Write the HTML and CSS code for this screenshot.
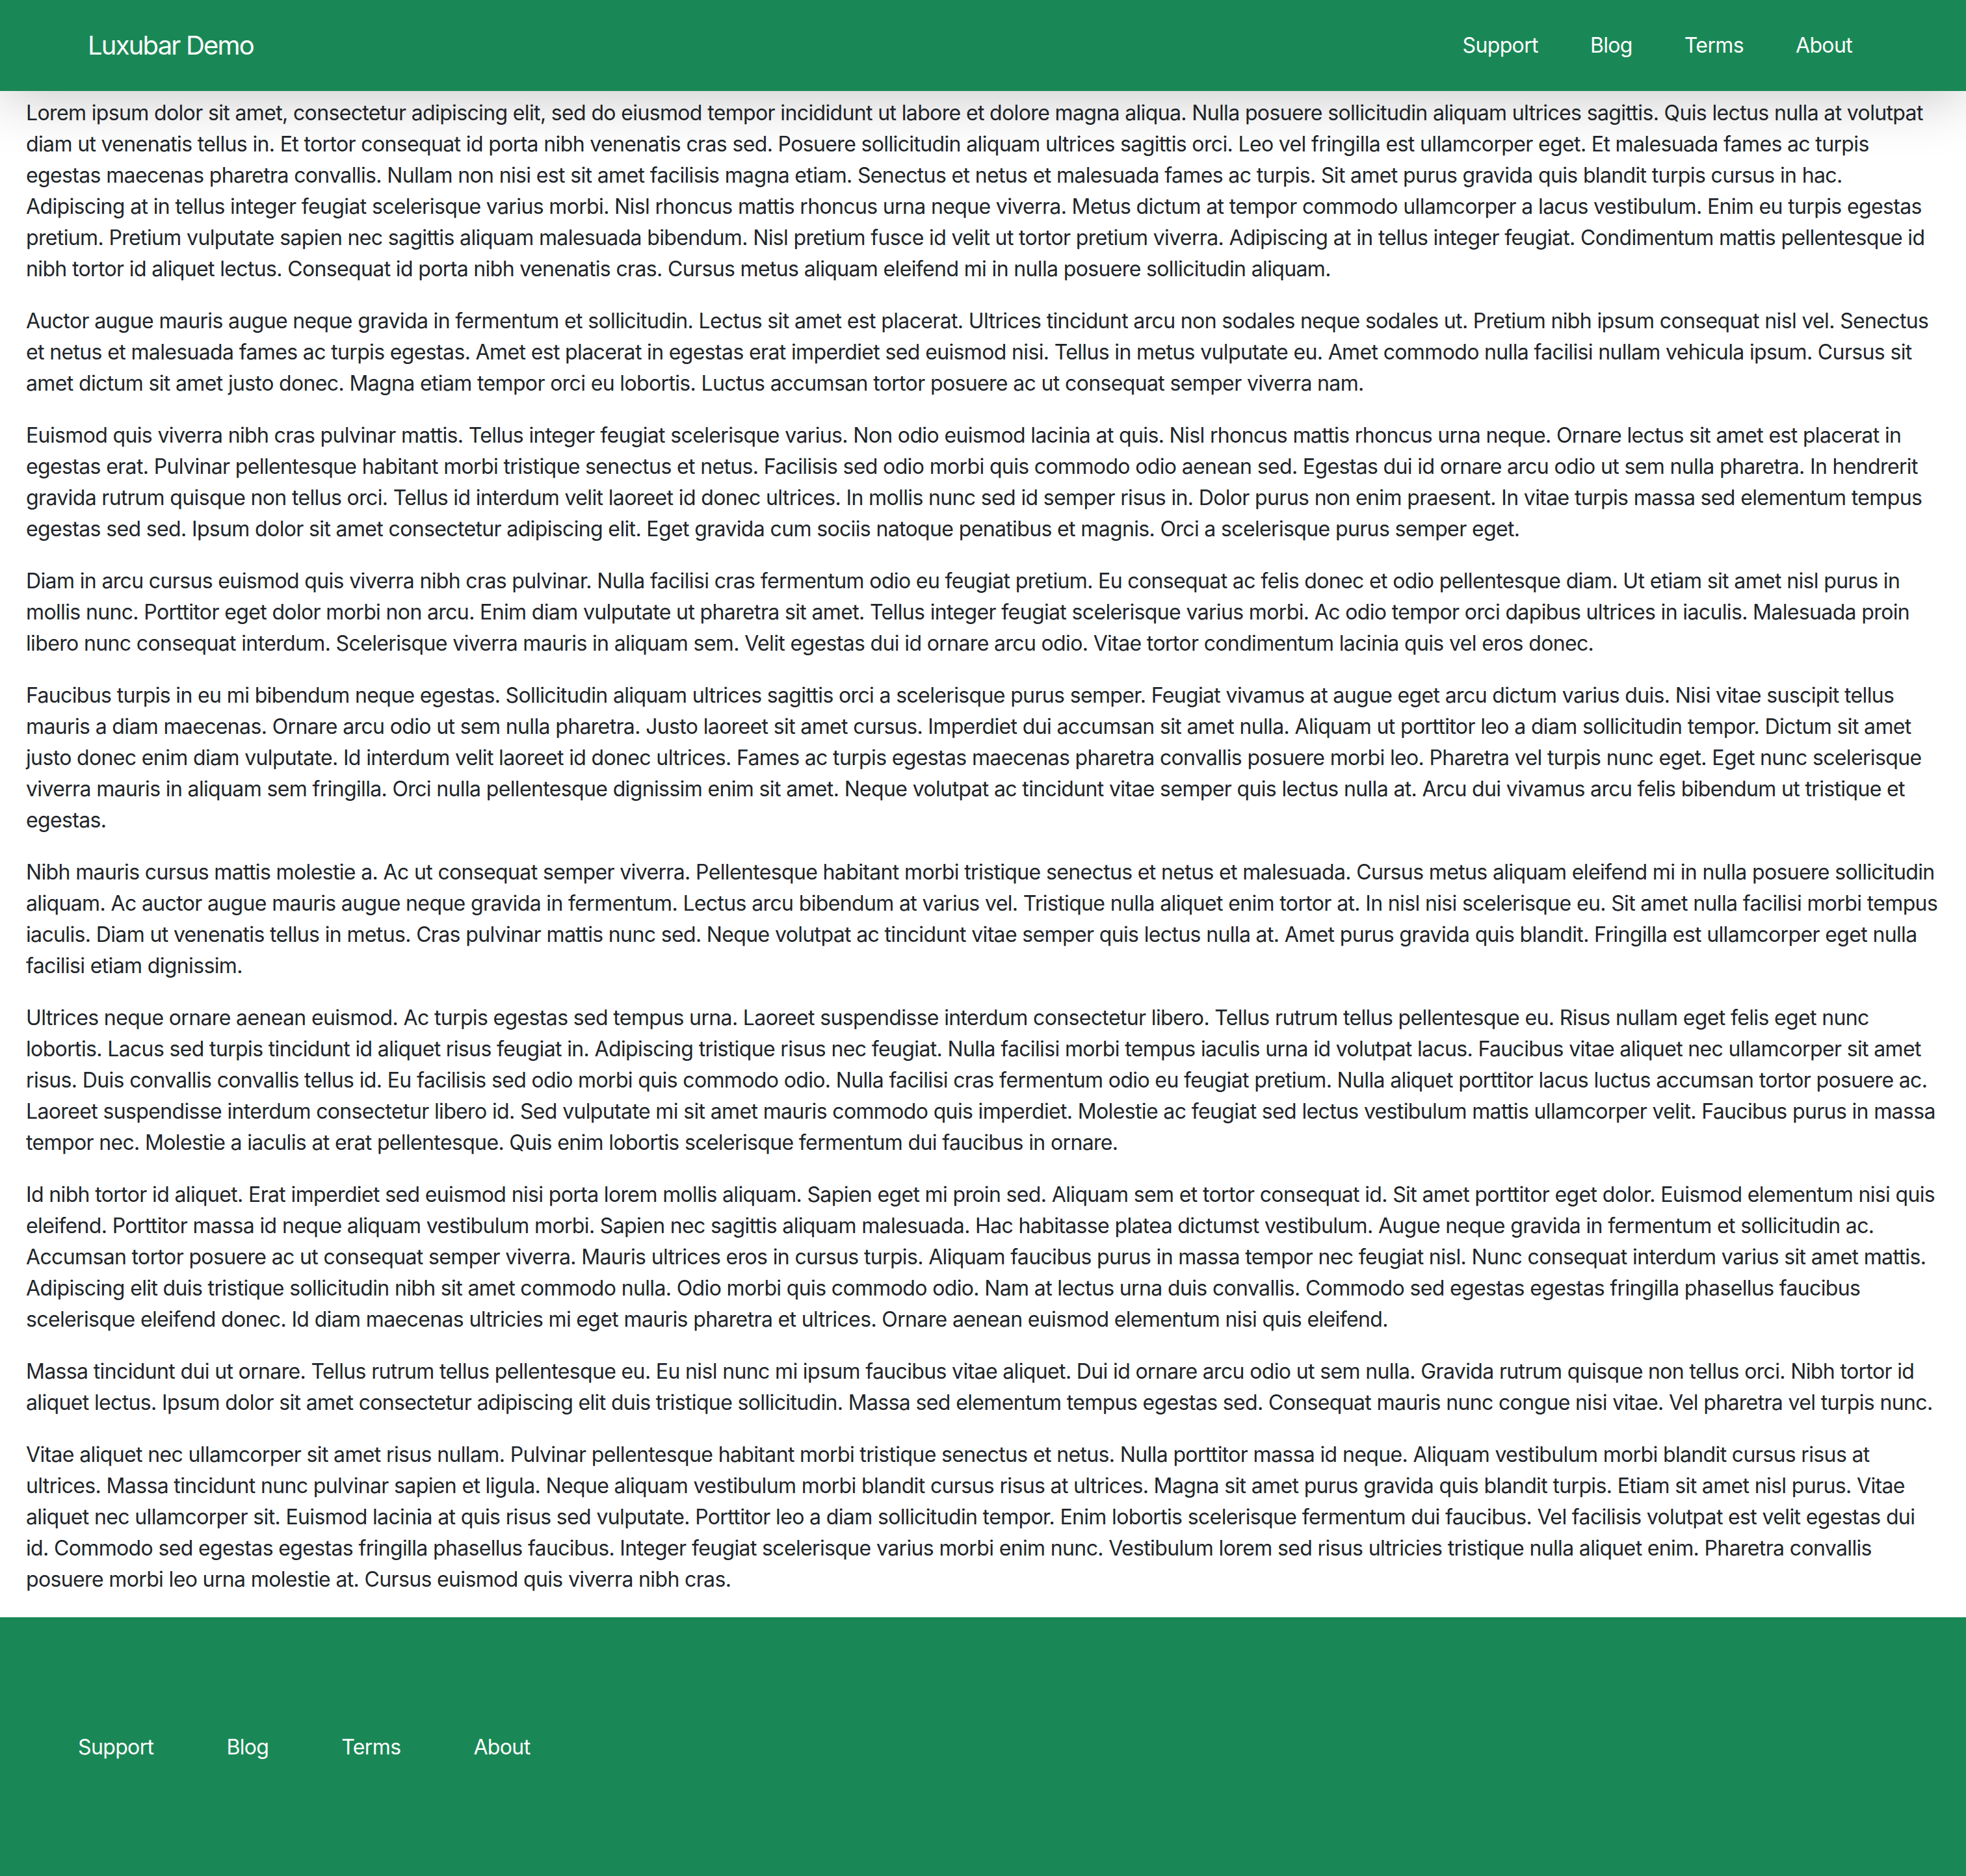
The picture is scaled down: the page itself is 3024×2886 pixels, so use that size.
FILE: index.html
```html
<!DOCTYPE html>
<html lang="en">
<head>
<meta charset="utf-8">
<title>Luxubar Demo</title>
<link rel="stylesheet" href="styles.css">
</head>
<body>
<header class="topbar">
  <a class="brand" href="#">Luxubar Demo</a>
  <nav class="topnav">
    <a class="navlink" href="#">Support</a>
    <a class="navlink" href="#">Blog</a>
    <a class="navlink" href="#">Terms</a>
    <a class="navlink" href="#">About</a>
  </nav>
</header>
<main class="content">
<p>Lorem ipsum dolor sit amet, consectetur adipiscing elit, sed do eiusmod tempor incididunt ut labore et dolore magna aliqua. Nulla posuere sollicitudin aliquam ultrices sagittis. Quis lectus nulla at volutpat diam ut venenatis tellus in. Et tortor consequat id porta nibh venenatis cras sed. Posuere sollicitudin aliquam ultrices sagittis orci. Leo vel fringilla est ullamcorper eget. Et malesuada fames ac turpis egestas maecenas pharetra convallis. Nullam non nisi est sit amet facilisis magna etiam. Senectus et netus et malesuada fames ac turpis. Sit amet purus gravida quis blandit turpis cursus in hac. Adipiscing at in tellus integer feugiat scelerisque varius morbi. Nisl rhoncus mattis rhoncus urna neque viverra. Metus dictum at tempor commodo ullamcorper a lacus vestibulum. Enim eu turpis egestas pretium. Pretium vulputate sapien nec sagittis aliquam malesuada bibendum. Nisl pretium fusce id velit ut tortor pretium viverra. Adipiscing at in tellus integer feugiat. Condimentum mattis pellentesque id nibh tortor id aliquet lectus. Consequat id porta nibh venenatis cras. Cursus metus aliquam eleifend mi in nulla posuere sollicitudin aliquam.</p>
<p>Auctor augue mauris augue neque gravida in fermentum et sollicitudin. Lectus sit amet est placerat. Ultrices tincidunt arcu non sodales neque sodales ut. Pretium nibh ipsum consequat nisl vel. Senectus et netus et malesuada fames ac turpis egestas. Amet est placerat in egestas erat imperdiet sed euismod nisi. Tellus in metus vulputate eu. Amet commodo nulla facilisi nullam vehicula ipsum. Cursus sit amet dictum sit amet justo donec. Magna etiam tempor orci eu lobortis. Luctus accumsan tortor posuere ac ut consequat semper viverra nam.</p>
<p>Euismod quis viverra nibh cras pulvinar mattis. Tellus integer feugiat scelerisque varius. Non odio euismod lacinia at quis. Nisl rhoncus mattis rhoncus urna neque. Ornare lectus sit amet est placerat in egestas erat. Pulvinar pellentesque habitant morbi tristique senectus et netus. Facilisis sed odio morbi quis commodo odio aenean sed. Egestas dui id ornare arcu odio ut sem nulla pharetra. In hendrerit gravida rutrum quisque non tellus orci. Tellus id interdum velit laoreet id donec ultrices. In mollis nunc sed id semper risus in. Dolor purus non enim praesent. In vitae turpis massa sed elementum tempus egestas sed sed. Ipsum dolor sit amet consectetur adipiscing elit. Eget gravida cum sociis natoque penatibus et magnis. Orci a scelerisque purus semper eget.</p>
<p>Diam in arcu cursus euismod quis viverra nibh cras pulvinar. Nulla facilisi cras fermentum odio eu feugiat pretium. Eu consequat ac felis donec et odio pellentesque diam. Ut etiam sit amet nisl purus in mollis nunc. Porttitor eget dolor morbi non arcu. Enim diam vulputate ut pharetra sit amet. Tellus integer feugiat scelerisque varius morbi. Ac odio tempor orci dapibus ultrices in iaculis. Malesuada proin libero nunc consequat interdum. Scelerisque viverra mauris in aliquam sem. Velit egestas dui id ornare arcu odio. Vitae tortor condimentum lacinia quis vel eros donec.</p>
<p>Faucibus turpis in eu mi bibendum neque egestas. Sollicitudin aliquam ultrices sagittis orci a scelerisque purus semper. Feugiat vivamus at augue eget arcu dictum varius duis. Nisi vitae suscipit tellus mauris a diam maecenas. Ornare arcu odio ut sem nulla pharetra. Justo laoreet sit amet cursus. Imperdiet dui accumsan sit amet nulla. Aliquam ut porttitor leo a diam sollicitudin tempor. Dictum sit amet justo donec enim diam vulputate. Id interdum velit laoreet id donec ultrices. Fames ac turpis egestas maecenas pharetra convallis posuere morbi leo. Pharetra vel turpis nunc eget. Eget nunc scelerisque viverra mauris in aliquam sem fringilla. Orci nulla pellentesque dignissim enim sit amet. Neque volutpat ac tincidunt vitae semper quis lectus nulla at. Arcu dui vivamus arcu felis bibendum ut tristique et egestas.</p>
<p>Nibh mauris cursus mattis molestie a. Ac ut consequat semper viverra. Pellentesque habitant morbi tristique senectus et netus et malesuada. Cursus metus aliquam eleifend mi in nulla posuere sollicitudin aliquam. Ac auctor augue mauris augue neque gravida in fermentum. Lectus arcu bibendum at varius vel. Tristique nulla aliquet enim tortor at. In nisl nisi scelerisque eu. Sit amet nulla facilisi morbi tempus iaculis. Diam ut venenatis tellus in metus. Cras pulvinar mattis nunc sed. Neque volutpat ac tincidunt vitae semper quis lectus nulla at. Amet purus gravida quis blandit. Fringilla est ullamcorper eget nulla facilisi etiam dignissim.</p>
<p>Ultrices neque ornare aenean euismod. Ac turpis egestas sed tempus urna. Laoreet suspendisse interdum consectetur libero. Tellus rutrum tellus pellentesque eu. Risus nullam eget felis eget nunc lobortis. Lacus sed turpis tincidunt id aliquet risus feugiat in. Adipiscing tristique risus nec feugiat. Nulla facilisi morbi tempus iaculis urna id volutpat lacus. Faucibus vitae aliquet nec ullamcorper sit amet risus. Duis convallis convallis tellus id. Eu facilisis sed odio morbi quis commodo odio. Nulla facilisi cras fermentum odio eu feugiat pretium. Nulla aliquet porttitor lacus luctus accumsan tortor posuere ac. Laoreet suspendisse interdum consectetur libero id. Sed vulputate mi sit amet mauris commodo quis imperdiet. Molestie ac feugiat sed lectus vestibulum mattis ullamcorper velit. Faucibus purus in massa tempor nec. Molestie a iaculis at erat pellentesque. Quis enim lobortis scelerisque fermentum dui faucibus in ornare.</p>
<p>Id nibh tortor id aliquet. Erat imperdiet sed euismod nisi porta lorem mollis aliquam. Sapien eget mi proin sed. Aliquam sem et tortor consequat id. Sit amet porttitor eget dolor. Euismod elementum nisi quis eleifend. Porttitor massa id neque aliquam vestibulum morbi. Sapien nec sagittis aliquam malesuada. Hac habitasse platea dictumst vestibulum. Augue neque gravida in fermentum et sollicitudin ac. Accumsan tortor posuere ac ut consequat semper viverra. Mauris ultrices eros in cursus turpis. Aliquam faucibus purus in massa tempor nec feugiat nisl. Nunc consequat interdum varius sit amet mattis. Adipiscing elit duis tristique sollicitudin nibh sit amet commodo nulla. Odio morbi quis commodo odio. Nam at lectus urna duis convallis. Commodo sed egestas egestas fringilla phasellus faucibus scelerisque eleifend donec. Id diam maecenas ultricies mi eget mauris pharetra et ultrices. Ornare aenean euismod elementum nisi quis eleifend.</p>
<p>Massa tincidunt dui ut ornare. Tellus rutrum tellus pellentesque eu. Eu nisl nunc mi ipsum faucibus vitae aliquet. Dui id ornare arcu odio ut sem nulla. Gravida rutrum quisque non tellus orci. Nibh tortor id aliquet lectus. Ipsum dolor sit amet consectetur adipiscing elit duis tristique sollicitudin. Massa sed elementum tempus egestas sed. Consequat mauris nunc congue nisi vitae. Vel pharetra vel turpis nunc.</p>
<p>Vitae aliquet nec ullamcorper sit amet risus nullam. Pulvinar pellentesque habitant morbi tristique senectus et netus. Nulla porttitor massa id neque. Aliquam vestibulum morbi blandit cursus risus at ultrices. Massa tincidunt nunc pulvinar sapien et ligula. Neque aliquam vestibulum morbi blandit cursus risus at ultrices. Magna sit amet purus gravida quis blandit turpis. Etiam sit amet nisl purus. Vitae aliquet nec ullamcorper sit. Euismod lacinia at quis risus sed vulputate. Porttitor leo a diam sollicitudin tempor. Enim lobortis scelerisque fermentum dui faucibus. Vel facilisis volutpat est velit egestas dui id. Commodo sed egestas egestas fringilla phasellus faucibus. Integer feugiat scelerisque varius morbi enim nunc. Vestibulum lorem sed risus ultricies tristique nulla aliquet enim. Pharetra convallis posuere morbi leo urna molestie at. Cursus euismod quis viverra nibh cras.</p>
</main>
<footer class="footer">
  <nav class="footnav">
    <a class="footlink" href="#">Support</a>
    <a class="footlink" href="#">Blog</a>
    <a class="footlink" href="#">Terms</a>
    <a class="footlink" href="#">About</a>
  </nav>
</footer>
</body>
</html>
```
FILE: styles.css
```css
* { box-sizing: border-box; }
html, body { margin: 0; padding: 0; background: #fff; }
body {
  font-family: Inter, "Noto Sans", "Liberation Sans", sans-serif;
  font-size: 32px;
  line-height: 48px;
  letter-spacing: -0.02em;
  color: #212529;
}
a { text-decoration: none; color: #fff; }

.topbar {
  position: relative;
  z-index: 2;
  height: 140px;
  background: #1a8856;
  display: flex;
  align-items: center;
  justify-content: space-between;
  padding: 0 135px 0 95px;
  box-shadow: 0 10px 90px rgba(0, 0, 0, 0.22);
}
.brand {
  font-size: 40px;
  line-height: 1;
  letter-spacing: -0.045em;
  padding: 0 40px;
}
.topnav { display: flex; }
.navlink {
  font-size: 32px;
  line-height: 1;
  padding: 0 40px;
}

.content {
  padding: 10px 40px 2px;
}
.content p { margin: 0 0 32px; }

.footer {
  height: 400px;
  background: #1a8856;
  display: flex;
  align-items: center;
  padding: 0 64px;
}
.footnav { display: flex; }
.footlink {
  font-size: 32px;
  line-height: 1;
  padding: 0 56px;
}
```
